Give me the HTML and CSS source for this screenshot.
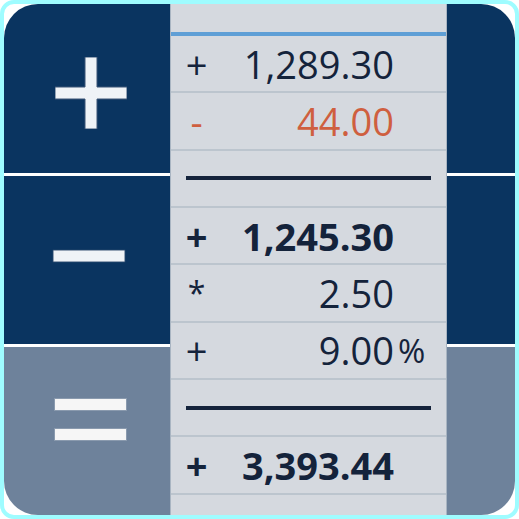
FILE: index.html
```html
<!DOCTYPE html>
<html lang="en">
<head>
    <meta charset="UTF-8">
    <title>tape calculator</title>
    <link rel="stylesheet" href="styles.css">
</head>
<body>

    <div class="icon">
        <!-- operator keys -->
        <div class="keys keys-left">
            <div class="key key-plus">
                <svg width="72" height="72" viewBox="0 0 72 72">
                    <path d="M30 0h12v30h30v12h-30v30h-12v-30h-30v-12h30z" fill="#eff3f7" stroke="#3b5576" stroke-width="1"/>
                </svg>
            </div>
            <div class="key key-minus">
                <svg width="73" height="13" viewBox="0 0 73 13">
                    <rect x="0.5" y="0.5" width="72" height="12" fill="#eff3f7" stroke="#3b5576" stroke-width="1"/>
                </svg>
            </div>
            <div class="key key-equals">
                <svg width="73" height="43" viewBox="0 0 73 43">
                    <rect x="0.5" y="0.5" width="72" height="12" fill="#f6f6f6" stroke="#8a9aae" stroke-width="1"/>
                    <rect x="0.5" y="30.5" width="72" height="12" fill="#f6f6f6" stroke="#8a9aae" stroke-width="1"/>
                </svg>
            </div>
        </div>

        <!-- paper tape -->
        <div class="tape">
            <div class="row first">
                <span class="sign">+</span><span class="num">1,289.30</span><span class="suffix"></span>
            </div>
            <div class="row minus">
                <span class="sign">-</span><span class="num">44.00</span><span class="suffix"></span>
            </div>
            <div class="row rule"><div class="rule-line"></div></div>
            <div class="row total">
                <span class="sign">+</span><span class="num">1,245.30</span><span class="suffix"></span>
            </div>
            <div class="row">
                <span class="sign star">*</span><span class="num">2.50</span><span class="suffix"></span>
            </div>
            <div class="row">
                <span class="sign">+</span><span class="num">9.00</span><span class="suffix">%</span>
            </div>
            <div class="row rule"><div class="rule-line"></div></div>
            <div class="row total">
                <span class="sign">+</span><span class="num">3,393.44</span><span class="suffix"></span>
            </div>
            <div class="row"></div>
        </div>

        <div class="keys keys-right">
            <div class="key"></div>
            <div class="key"></div>
            <div class="key key-equals"></div>
        </div>
    </div>

</body>
</html>
```

FILE: styles.css
```css
html,body{margin: 0; padding: 0; background: #ffffff;}

.icon {
    width: 519px;
    height: 519px;
    box-sizing: border-box;
    border: 4px solid #9ffcff;
    border-radius: 14px;
    background: #ffffff;
    display: grid;
    grid-template-columns: 166px 277px 1fr;
    overflow: hidden;
}

/* key columns */
.keys {
    display: grid;
    grid-template-rows: 168.5px 168px 1fr;
    row-gap: 3px;
    min-height: 0;
}
.key {
    background: #0a3460;
    display: flex;
    align-items: center;
    justify-content: center;
    min-height: 0;
}
.key-equals {background: #6e829b;}
.keys-left .key:first-child{border-top-left-radius: 34px;}
.keys-left .key:last-child{border-bottom-left-radius: 34px;}
.keys-right .key:first-child{border-top-right-radius: 34px;}
.keys-right .key:last-child{border-bottom-right-radius: 34px;}

.key-plus svg{transform: translate(4px, 5px);}
.key-minus svg{transform: translate(1.5px, -3.5px);}
.key-equals svg{transform: translate(3px, -11px);}

/* tape */
.tape {
    background: #d5d9df;
    border-left: 1px solid #a9b5c2;
    border-right: 1px solid #a9b5c2;
    padding-top: 28px;
    display: flex;
    flex-direction: column;
    font-family: "Open Sans", "Noto Sans", sans-serif;
    font-size: 38px;
    color: #14233b;
    min-height: 0;
}
.row {
    flex: none;
    height: 57.33px;
    box-sizing: border-box;
    border-bottom: 2px solid #bcc5ce;
    padding: 0 15px;
    display: grid;
    grid-template-columns: 22px 1fr 37px;
    align-items: center;
    line-height: 1;
}
.row.first{border-top: 4px solid #5f9fd6; height: 61.33px;}
.row.minus{color: #cf5f3f;}
.row.total{font-weight: 700;}
.sign{text-align: center; margin-left: -1px;}
.star{font-size: 32px;}
.num{text-align: right;}
.suffix{font-size: 33px; padding-left: 4px;}

.row.rule{display: flex; align-items: center;}
.rule-line{flex: 1; height: 4px; background: #14233b;}
```
